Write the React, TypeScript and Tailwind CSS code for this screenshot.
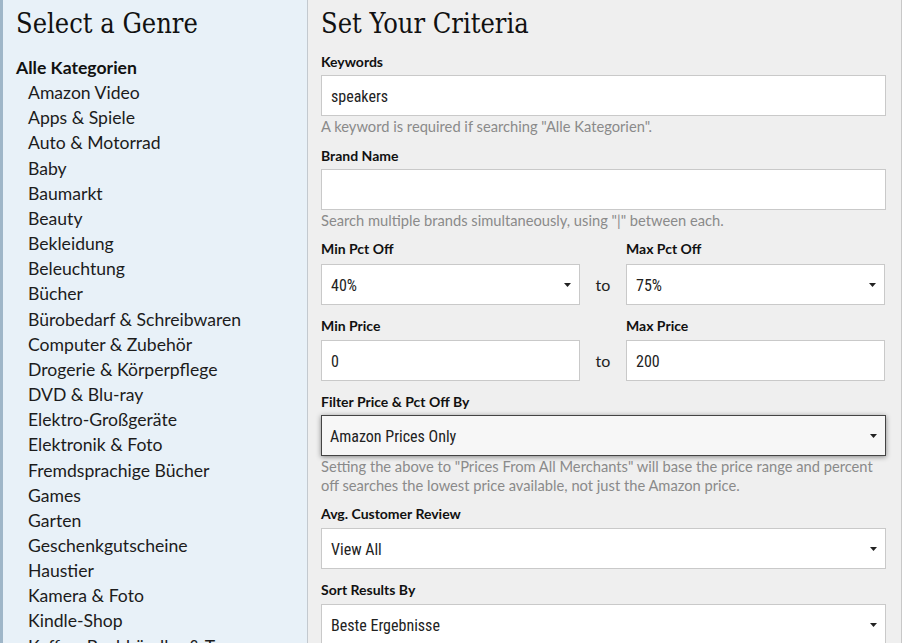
import React from 'react';

const genres = [
  'Amazon Video',
  'Apps & Spiele',
  'Auto & Motorrad',
  'Baby',
  'Baumarkt',
  'Beauty',
  'Bekleidung',
  'Beleuchtung',
  'Bücher',
  'Bürobedarf & Schreibwaren',
  'Computer & Zubehör',
  'Drogerie & Körperpflege',
  'DVD & Blu-ray',
  'Elektro-Großgeräte',
  'Elektronik & Foto',
  'Fremdsprachige Bücher',
  'Games',
  'Garten',
  'Geschenkgutscheine',
  'Haustier',
  'Kamera & Foto',
  'Kindle-Shop',
  'Kaffee, Buchhändler & Tee',
];

function Caret() {
  return (
    <svg width="7" height="4" viewBox="0 0 7 4" className="shrink-0">
      <path d="M0 0 L7 0 L3.5 4 Z" fill="#222" />
    </svg>
  );
}

function Label({ children }: { children: React.ReactNode }) {
  return <div className="text-[14px] leading-[20px] font-bold text-[#111]">{children}</div>;
}

function Field({ value, select, focused }: { value: string; select?: boolean; focused?: boolean }) {
  return (
    <div
      className={
        focused
          ? 'h-[41px] flex items-center justify-between pl-[8px] pr-[8px] bg-[#f7f7f7] border border-[#444] shadow-[0_1px_5px_rgba(0,0,0,0.45)]'
          : 'h-[41px] flex items-center justify-between pl-[9px] pr-[8px] bg-white border border-[#c9c9c9]'
      }
    >
      <span className="pt-[3px] text-[16px] text-[#222] font-['Liberation_Sans_Narrow','Roboto_Condensed',Roboto,sans-serif]">
        {value}
      </span>
      {select && <Caret />}
    </div>
  );
}

function Help({ children, two }: { children: React.ReactNode; two?: boolean }) {
  return (
    <div className={two ? 'mt-[1px] text-[14.7px] leading-[19px] text-[#8a8a8a]' : 'text-[14.7px] leading-[20px] text-[#8a8a8a]'}>
      {children}
    </div>
  );
}

export default function App() {
  return (
    <div className="flex h-[643px] overflow-hidden bg-white font-['Lato','Noto_Sans',sans-serif]">
      {/* Genres */}
      <aside className="w-[308px] shrink-0 bg-[#e8f1f8] border-l-[3px] border-l-[#9fb6c8] border-r border-r-[#c3c9cf] pl-[13px]">
        <h2 className="pt-[4px] leading-[40px] text-[27px] text-[#111] font-['DejaVu_Serif_Condensed','DejaVu_Serif',serif]">
          Select a Genre
        </h2>
        <ul className="mt-[11px] text-[17.6px] leading-[25.15px] text-[#1c1c1c]">
          <li className="font-bold text-[#111]">Alle Kategorien</li>
          {genres.map((g) => (
            <li key={g} className="pl-[12px] whitespace-nowrap">
              {g}
            </li>
          ))}
        </ul>
      </aside>

      {/* Criteria */}
      <main className="w-[594px] shrink-0 bg-[#efefef] border-r border-r-[#c8c8c8] pl-[13px] pr-[15px]">
        <h2 className="pt-[4px] leading-[40px] text-[27px] text-[#111] font-['DejaVu_Serif_Condensed','DejaVu_Serif',serif]">
          Set Your Criteria
        </h2>

        <div className="mt-[8px]">
          <Label>Keywords</Label>
          <div className="mt-[3px]">
            <Field value="speakers" />
          </div>
          <Help>A keyword is required if searching "Alle Kategorien".</Help>
        </div>

        <div className="mt-[10px]">
          <Label>Brand Name</Label>
          <div className="mt-[3px]">
            <Field value="" />
          </div>
          <Help>Search multiple brands simultaneously, using "|" between each.</Help>
        </div>

        <div className="mt-[9px] grid grid-cols-[259px_46px_259px] items-end">
          <div>
            <Label>Min Pct Off</Label>
            <div className="mt-[5px]">
              <Field value="40%" select />
            </div>
          </div>
          <div className="h-[41px] flex items-center justify-center text-[16px] text-[#222]">to</div>
          <div>
            <Label>Max Pct Off</Label>
            <div className="mt-[5px]">
              <Field value="75%" select />
            </div>
          </div>
        </div>

        <div className="mt-[11px] grid grid-cols-[259px_46px_259px] items-end">
          <div>
            <Label>Min Price</Label>
            <div className="mt-[4px]">
              <Field value="0" />
            </div>
          </div>
          <div className="h-[41px] flex items-center justify-center text-[16px] text-[#222]">to</div>
          <div>
            <Label>Max Price</Label>
            <div className="mt-[4px]">
              <Field value="200" />
            </div>
          </div>
        </div>

        <div className="mt-[11px]">
          <Label>Filter Price &amp; Pct Off By</Label>
          <div className="mt-[3px]">
            <Field value="Amazon Prices Only" select focused />
          </div>
          <Help two>
            Setting the above to "Prices From All Merchants" will base the price range and percent off searches the
            lowest price available, not just the Amazon price.
          </Help>
        </div>

        <div className="mt-[9px]">
          <Label>Avg. Customer Review</Label>
          <div className="mt-[4px]">
            <Field value="View All" select />
          </div>
        </div>

        <div className="mt-[11px]">
          <Label>Sort Results By</Label>
          <div className="mt-[4px]">
            <Field value="Beste Ergebnisse" select />
          </div>
        </div>
      </main>
    </div>
  );
}
